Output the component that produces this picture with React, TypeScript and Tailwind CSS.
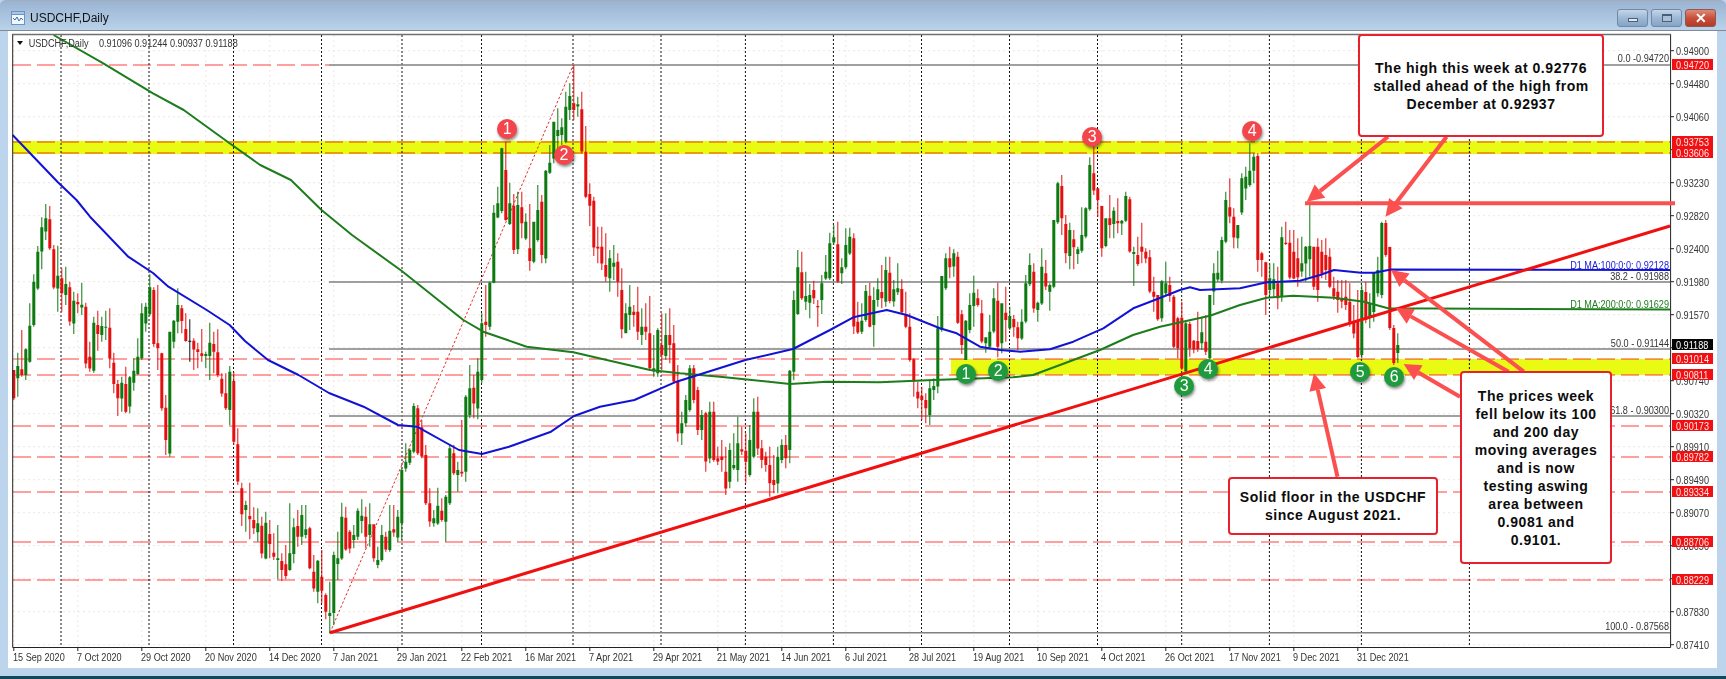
import React from "react";

type Bar = { k: number; c: string; w1: number; b1: number; b2: number; w2: number };

const seg = (start: number, off: number, s: string): Bar[] =>
  s
    .trim()
    .split(/\s*,\s*/)
    .map((row, i) => {
      const c = row[0];
      const [a, b, d, e] = row.slice(1).trim().split(/\s+/).map(Number);
      return { k: start + i, c, w1: off + a / 3, b1: off + b / 3, b2: off + d / 3, w2: off + e / 3 };
    });

const S1 = `r570 570 655 660,g518 558 595 650,r450 568 585 590,g505 508 585 600,g370 437 545 548,g283 305 435 440,g198 215 325 330,g112 142 215 268,g72 115 155 180,r78 118 205 210,r195 208 323 328,g197 287 325 395,r265 295 340 395,g260 312 345 375,r305 322 425 437,g335 362 430 462,r340 366 373 400,g308 374 382 405,r368 380 550 565,r485 530 565 575,g410 428 572 578,r392 435 462 512,g410 438 465 485,g392 440 443 480,r385 443 535 565,r518 548 612 640,r600 612 655 708,g590 608 655 695,r560 612 695 700,g588 592 680 700,g535 572 608 632,g475 530 582 585,g370 400 535 540,g368 380 430 455,g283 322 403 408,r322 330 492 500,r315 490 505 570,r518 520 685 692,r645 683 780 825,g455 455 820 830,g420 422 485 505,g325 375 425 460,r375 385 423 460,r400 447 483 485,k418 482 484 545,r475 482 508 570,r488 508 516 565,r447 520 528 545,g515 522 528 565,g428 488 528 600,r455 492 515 580,r448 517 585 592,r580 596 640 650,r580 640 685 690,g558 575 690 735,r575 603 785 795,r745 793 905 915,r908 925 1003 1038,g962 975 990 1055,r908 1008 1018 1078,r982 1020 1045 1062,g985 1030 1057 1085,r1010 1037 1120 1135,g995 1028 1135 1138,r1020 1062 1092 1135,r1060 1118 1130 1140,g1035 1135 1140 1198,r1120 1143 1170 1203,r1095 1153 1188 1198,g970 1120 1170 1172,g1015 1042 1122 1150,r990 1038 1070 1100,g975 1005 1070 1095,g975 1048 1065 1075,r1040 1045 1165 1168,r1125 1175 1225 1235,g1140 1142 1235 1270,r1110 1190 1232 1270,r1240 1245 1295 1318,g1205 1299 1308 1359,g1115 1125 1299 1335`;
const S2 = `g575 655 672 720,g488 530 655 660,r500 533 628 632,r570 575 625 640,g555 585 600 625,g505 512 590 600,g478 527 543 580,r500 530 590 625,g490 553 585 620,r553 553 655 665,g620 660 675 685,g555 585 660 665,r575 590 628 635,g495 572 630 635,r495 568 578 590,g510 530 592 605,g385 390 550 600,g310 365 385 395,g325 330 368 375,g190 198 335 340,r195 205 340 345,r240 262 350 355,r315 345 490 495,r445 490 545 560,g510 535 550 560,g443 497 550 555,r475 512 540 545,g465 470 545 605,g315 325 490 495,r315 340 400 405,g365 390 405 455,r240 395 400 410,g165 170 395 425,g75 145 225 235,r105 143 190 235,g55 95 205 238`;
const S3 = `g790 820 990 1000,r705 815 825 860,g695 698 830 840,g465 488 698 700,g410 460 503 505,g293 295 483 490,r275 360 510 512,g398 460 522 525,r432 467 600 612,g425 465 598 612,r425 472 520 565,g490 515 565 570,r462 595 633 662,g515 515 635 640,g405 480 570 575,r435 455 615 640,g360 362 625 640,g285 338 368 372,g215 215 325 340,g175 240 258 300,g205 232 255 285,g125 170 275 280,g100 138 180 210,r45 160 180 210,g140 163 170 200,r125 178 305 310,r228 305 440 445,r400 432 467 528,r440 452 592 618,r530 590 595 640,r530 590 640 660,r550 645 680 695,g600 625 685 725,g585 638 650 690,r610 635 695 740,r655 720 838 865,g760 790 850 850,g705 770 795 840,r765 785 795 830,r710 785 845 870,g775 830 855 885,r760 830 845 870,r738 850 955 960,g855 955 965 980,g835 840 970 980,r790 885 915 960,g790 855 918 930,r775 855 885 940,r825 880 995 1000,r945 995 1150 1175`;
const S4 = `g215 250 280 315,g165 180 250 260,g75 85 210 215,r75 85 180 190,r140 150 270 285,g210 225 270 300,r215 220 365 395,g185 215 355 370,r185 215 360 365,r320 355 365 375,r300 350 360 395,r320 395 445 465,g310 330 425 445,g280 375 385 390,g230 310 390 425,r260 328 335 345,r280 332 365 428,g255 300 405 410,g175 215 350 355,r170 215 325 345,r300 325 360 385,r335 350 375 395,r320 375 430 470,r345 420 435 460,g320 350 430 460,g298 315 360 370,r285 315 355 385`;
const S5 = `g720 722 960 1000,g482 510 725 750,g360 412 552 555,r365 427 505 510,g425 498 515 540,g462 495 518 565,r452 480 505 522,r510 528 532 590,g435 460 510 552,g375 425 445 450,g308 340 445 450,g285 322 338 345,r275 343 455 458,g385 412 430 462,g295 345 412 418,g293 320 370 375,r310 325 590 612,r515 575 607 612,g520 572 605 612,g465 483 570 575,r458 497 590 592,g472 510 585 650,g445 478 510 530,r405 486 505 535,g380 420 515 530,r380 428 513 520,g450 478 515 530,g400 475 487 495,r448 477 547 552,r485 555 590 595,r550 590 690 695,r685 688 755 800,r755 785 805 835,r770 797 810 870,r790 810 835 880,g750 775 855 885,g745 768 780 810,g558 595 770 790,g438 438 600 605,g370 385 475 480,r350 385 412 445,g358 370 410 440,r365 380 578 582,r540 553 645 672,g570 572 690 690,g490 525 600 610,g437 488 528 590,r478 505 525 530,r510 550 635 640,g622 622 640 668,g555 605 650 655,g475 505 605 610,r458 512 650 682`;
const S6 = `g550 550 670 700,r500 578 600 665,g560 588 625 630,r585 597 622 650,r605 622 655 690,g568 605 655 660,g465 490 605 610,g400 435 493 498,r430 455 565 578,g545 548 570 605,g385 440 550 555,r420 460 500 510,g490 495 515 572,g300 300 500 505,g185 190 307 312,r165 198 295 345,r285 312 400 430,g308 330 408 448,r330 358 382 448,g380 388 402 432,g262 345 392 398,g262 265 350 355,g112 135 268 272,r75 160 212 225,r205 205 240 290,r258 258 385 410,g295 295 378 382,r225 295 315 355,g262 272 312 355,r235 303 310 340,g300 302 310 345,g215 228 302 306,r230 238 395 398,g380 396 402 498,r350 405 432 438,r308 380 395 430,r385 395 415 430,r390 412 515 520,r470 515 530 575,r525 525 598 602,g480 484 595 605,g425 490 520 525,r470 495 528 545,r525 530 680 685,r590 595 685 715,r545 593 745 750,g605 610 755 760,r605 612 685 710,r660 662 688 700,r575 663 688 695,g590 637 670 690,r585 665 695 705,g525 525 715 718,g430 460 515 555,g392 458 478 485,g350 360 482 490,g215 240 365 370,r175 262 290 310,r265 290 352 385,g315 315 355 385,g160 175 278 285,g140 170 205 240,g70 152 195 200,g100 110 152 190,r100 108 420 455,r395 400 420 470,r425 427 525 585,g430 475 510 525,g430 478 508 530,r440 490 535 568,g320 352 530 545,r305 368 372 375,r330 368 472 478,r330 395 475 478,r355 415 472 500,g350 430 455 470,g378 380 430 485,g255 378 418 470,r380 380 500 510,r355 380 510 545,r360 395 460 475,r355 405 450 480,r385 410 500 505,r470 505 530 540,r480 515 540 578`;
const S7 = `r840 895 905 925,r840 890 915 930,r850 905 965 980,r915 965 1000 1015,r870 966 1071 1074,g855 870 1065 1075,r845 876 960 970,g880 909 951 985,g835 816 936 965,g770 810 880 890,g665 669 885 895,r660 669 765 770,r740 741 984 990,r975 984 1089 1095,g1000 1035 1059 1089`;

const bars: Bar[] = [
  ...seg(0, 180, S1),
  ...seg(81, 340, S2),
  ...seg(117, 50, S3),
  ...seg(167, 340, S4),
  ...seg(194, 130, S5),
  ...seg(247, 120, S6),
  ...seg(332, 0, S7),
];

const COLORS: Record<string, string> = { r: "#e60f10", g: "#0d7a10", k: "#111111" };
const bx = (k: number) => 13.3 + 4 * k;

const candlePath = (c: string) =>
  bars
    .filter((b) => b.c === c)
    .map((b) => {
      const x = bx(b.k);
      const h = Math.max(1, b.b2 - b.b1);
      return `M${x.toFixed(1)} ${b.w1.toFixed(1)}h1V${b.w2.toFixed(1)}h-1Z M${(x - 1).toFixed(1)} ${b.b1.toFixed(1)}h3v${h.toFixed(1)}h-3Z`;
    })
    .join(" ");

const pts = (a: number[][]) => a.map((p) => p.join(",")).join(" ");

const BLUE = [[12.6,135],[28.7,151.7],[57.4,181.7],[76.5,200],[90,216.7],[128.2,256.7],[153,273],[168.4,286.7],[206.7,310],[229.6,325],[245,341],[268,360],[298.5,375],[329,393],[363.6,406.7],[398,425],[417,426.7],[459,450],[482,454],[509,446.7],[551,431.7],[574,416],[600,406.7],[634.4,400],[676.5,381.7],[745.4,360],[793,349],[830,330],[853.3,317.3],[886.7,310],[906.7,315],[940,328.3],[956.7,333.3],[980,346.7],[1000,350],[1020,351.7],[1050,349.3],[1073.3,341.7],[1103.3,328.3],[1133.3,308.3],[1156.7,299.3],[1180,290],[1190,287.3],[1200,290],[1240,288.3],[1266.7,282.3],[1300,280.7],[1320,275],[1334,270],[1361,272.7],[1374.4,272.7],[1391,269.6],[1670,270]];
const GREEN = [[53.6,35],[103.3,63.3],[153,93.3],[183.7,110],[229.6,143.3],[260.2,165],[290.9,180],[321.5,210],[352,235],[401.8,271],[463.3,320],[483.3,331.7],[526.7,346.7],[573.3,352.3],[606.7,360],[650,370],[680,373.3],[720,376.7],[790,384],[826.7,381.7],[880,382.3],[933.3,380],[1013,377.3],[1033,375],[1060,365],[1100,350],[1133,335],[1160,326.7],[1210,315.7],[1240,305],[1266.7,297.7],[1293,295.7],[1334,297.7],[1364,301.7],[1388,308.3],[1670,309.5]];

const dateLabels = ["15 Sep 2020","7 Oct 2020","29 Oct 2020","20 Nov 2020","14 Dec 2020","7 Jan 2021","29 Jan 2021","22 Feb 2021","16 Mar 2021","7 Apr 2021","29 Apr 2021","21 May 2021","14 Jun 2021","6 Jul 2021","28 Jul 2021","19 Aug 2021","10 Sep 2021","4 Oct 2021","26 Oct 2021","17 Nov 2021","9 Dec 2021","31 Dec 2021"];
const priceAxis = ["0.94900","0.94480","0.94060","","0.93230","0.92820","0.92400","0.91980","0.91570","","0.90740","0.90320","0.89910","0.89490","0.89070","0.88650","","0.87830","0.87410"];
const redTags: [string, number][] = [["0.94720",65],["0.93753",142],["0.93606",153],["0.91014",359],["0.90811",375],["0.90173",426],["0.89782",457],["0.89334",492],["0.88706",542],["0.88229",580]];
const salmon = [65,142,153,359,375,426,457,492,542,580];
const dotted = [61,149,233.5,321.5,402,481.5,573,661,745.4,833.4,921.5,1009.5,1097.5,1181.7,1269.4,1361.4,1469.4];
const fibs = [65,282,349,416,632.7];
const fibLabels: [string, number][] = [["0.0 -0.94720",62],["38.2 - 0.91988",280],["50.0 - 0.91144",347],["61.8 - 0.90300",414],["100.0 - 0.87568",630]];

const arrows = [
  [1388,136.7,1306.7,201.7],
  [1446.6,136.7,1385.5,216.7],
  [1523.7,371.7,1391,270],
  [1508.6,371.7,1396,308],
  [1460,396.7,1403.6,364],
  [1337.5,476.7,1314,373.3],
];

const bubbles: [string, number, number, string][] = [
  ["1",507.3,129,"r"],["2",564,155,"r"],["3",1092.3,136.7,"r"],["4",1252.3,131,"r"],
  ["1",966,374,"g"],["2",998.3,370.7,"g"],["3",1184.3,385.7,"g"],["4",1208.3,369.3,"g"],["5",1360.3,371.7,"g"],["6",1394.2,377.3,"g"],
];

function Arrow({ a }: { a: number[] }) {
  const [x1, y1, x2, y2] = a;
  const l = Math.hypot(x2 - x1, y2 - y1);
  const ux = (x2 - x1) / l;
  const uy = (y2 - y1) / l;
  const bx0 = x2 - ux * 17;
  const by0 = y2 - uy * 17;
  const p = [[x2, y2], [bx0 - uy * 8.5, by0 + ux * 8.5], [bx0 + uy * 8.5, by0 - ux * 8.5]];
  return (
    <g>
      <line x1={x1} y1={y1} x2={bx0} y2={by0} stroke="#fb5050" strokeWidth="4" />
      <polygon points={pts(p)} fill="#fb5050" />
    </g>
  );
}

const axisFont = { fontFamily: '"Liberation Sans", Arial, sans-serif', fontSize: 11 };

function AxisText({ x, y, fill = "#333", anchor = "start", children }: { x: number; y: number; fill?: string; anchor?: "start" | "end"; children: string }) {
  return (
    <text transform={`translate(${x} ${y}) scale(0.83 1)`} fill={fill} textAnchor={anchor} {...axisFont}>
      {children}
    </text>
  );
}

function Chart() {
  return (
    <svg className="absolute inset-0 h-full w-full" viewBox="8 31 1709 637">
      {/* faint grid */}
      <g stroke="#efe6de" strokeWidth="1" strokeDasharray="2 3">
        {priceAxis.map((_, i) => (
          <line key={i} x1={13} x2={1670} y1={50.7 + 33 * i} y2={50.7 + 33 * i} />
        ))}
        {dateLabels.map((_, i) => (
          <line key={i} x1={13.8 + 64 * i} x2={13.8 + 64 * i} y1={35} y2={647} />
        ))}
      </g>
      {/* support and resistance bands */}
      <rect x="13" y="141" width="1657" height="13" fill="#e9fb12" />
      <rect x="951" y="359" width="719" height="16" fill="#e9fb12" />
      <g className="mix-blend-multiply" stroke="#ff8080" strokeWidth="1.6" strokeDasharray="18 6">
        {salmon.map((y) => (
          <line key={y} x1={13} x2={y === 65 ? 329 : 1670} y1={y} y2={y} />
        ))}
      </g>
      {/* vertical dotted */}
      <g stroke="#111" strokeWidth="1" strokeDasharray="2 2">
        {dotted.map((x) => (
          <line key={x} x1={x} x2={x} y1={35} y2={647} />
        ))}
      </g>
      {/* fibonacci */}
      <g stroke="#808080" strokeWidth="1.5">
        {fibs.map((y) => (
          <line key={y} x1={329} x2={1670} y1={y} y2={y} />
        ))}
      </g>
      <line x1={330} y1={632.7} x2={573.3} y2={65} stroke="#e63030" strokeWidth="1" strokeDasharray="2.5 2" />
      {/* candles */}
      {["r", "g", "k"].map((c) => (
        <path key={c} d={candlePath(c)} fill={COLORS[c]} />
      ))}
      {/* moving averages */}
      <polyline points={pts(GREEN)} fill="none" stroke="#1d7d1d" strokeWidth="2" strokeLinejoin="round" />
      <polyline points={pts(BLUE)} fill="none" stroke="#1212d6" strokeWidth="2" strokeLinejoin="round" />
      {/* trend line */}
      <line x1={330} y1={632.7} x2={1670} y2={226} stroke="#f01010" strokeWidth="3" />
      {/* frame */}
      <path d="M12.7 34V647.5H1670.6V34" fill="none" stroke="#222" strokeWidth="1" />
      <line x1={12.7} x2={1670.6} y1={34.5} y2={34.5} stroke="#707070" strokeWidth="1.5" />
      {/* axis ticks */}
      <g stroke="#222" strokeWidth="1">
        {priceAxis.map((_, i) => (
          <line key={i} x1={1671} x2={1674} y1={50.7 + 33 * i} y2={50.7 + 33 * i} />
        ))}
        {dateLabels.map((_, i) => (
          <line key={i} x1={13.8 + 64 * i} x2={13.8 + 64 * i} y1={647} y2={651} />
        ))}
      </g>
      {/* axis labels */}
      {priceAxis.map((p, i) =>
        p ? (
          <AxisText key={p} x={1676} y={54.7 + 33 * i}>{p}</AxisText>
        ) : null
      )}
      {dateLabels.map((d, i) => (
        <AxisText key={d} x={13 + 64 * i} y={661}>{d}</AxisText>
      ))}
      {redTags.map(([t, y]) => (
        <g key={t}>
          <rect x={1672} y={y - 6} width={41} height={11} fill="#f01014" />
          <AxisText x={1676} y={y + 3.5} fill="#ffe8e0">{t}</AxisText>
        </g>
      ))}
      <rect x={1672} y={339} width={41} height={11} fill="#050505" />
      <AxisText x={1676} y={348.5} fill="#ffffff">0.91188</AxisText>
      {fibLabels.map(([t, y]) => (
        <AxisText key={t} x={1669} y={y} anchor="end">{t}</AxisText>
      ))}
      <AxisText x={1669} y={269} anchor="end" fill="#1a1ad8">D1 MA:100:0:0: 0.92128</AxisText>
      <AxisText x={1669} y={308} anchor="end" fill="#1d7d1d">D1 MA:200:0:0: 0.91629</AxisText>
      {/* header */}
      <polygon points="17,41 23,41 20,45" fill="#111" />
      <AxisText x={28.7} y={46.5}>USDCHF,Daily</AxisText>
      <AxisText x={99} y={46.5}>0.91096 0.91244 0.90937 0.91188</AxisText>
      {/* drawn annotation lines */}
      <line x1={1305} x2={1675} y1={203.3} y2={203.3} stroke="#fb5050" strokeWidth="4" />
      {arrows.map((a, i) => (
        <Arrow key={i} a={a} />
      ))}
    </svg>
  );
}

function WinBtn({ children, close }: { children: React.ReactNode; close?: boolean }) {
  return (
    <div
      className={
        close
          ? "flex h-[18px] w-[31px] items-center justify-center rounded-[3px] border border-[#8c5a50] bg-linear-to-b from-[#dc8a78] via-[#c8503a] to-[#b23a28]"
          : "flex h-[18px] w-[31px] items-center justify-center rounded-[3px] border border-[#6f8aa8] bg-linear-to-b from-[#c4d6e8] via-[#9db8d4] to-[#86a4c4]"
      }
    >
      {children}
    </div>
  );
}

function Callout({ className, children }: { className: string; children: React.ReactNode }) {
  return (
    <div
      className={`absolute flex items-center justify-center rounded-[4px] border-2 border-[#e8222c] bg-white text-center text-[14px] leading-[18px] font-bold tracking-[0.55px] text-[#0c0c0c] ${className}`}
    >
      <div>{children}</div>
    </div>
  );
}

export default function App() {
  return (
    <div className="relative flex h-[679px] w-[1726px] flex-col overflow-hidden bg-[#bcd4ec] font-['Liberation_Sans',Arial,sans-serif]">
      <div className="flex h-[31px] shrink-0 items-center justify-between rounded-t-[6px] border-t border-b border-t-[#a4acb8] border-b-[#7f8a96] bg-linear-to-b from-[#9ab3d2] to-[#bad3ea] pt-[5px] pr-[10px] pl-[11px]">
        <div className="flex items-center gap-[5px]">
          <svg width="14" height="14" viewBox="0 0 14 14">
            <rect x="0.5" y="2.5" width="13" height="11" fill="#f2f7fc" stroke="#6b93c4" />
            <rect x="0.5" y="0.5" width="13" height="3" fill="#a9c6e6" stroke="#6b93c4" />
            <path d="M2 7l2 2 2-3 2 4 2-3 2 2" fill="none" stroke="#3a6fb0" strokeWidth="1" />
          </svg>
          <span className="text-[12px] leading-none text-[#101418]">USDCHF,Daily</span>
        </div>
        <div className="flex items-center gap-[3px]">
          <WinBtn>
            <div className="mt-[4px] h-[4px] w-[10px] border border-[#4a5e76] bg-[#dfe8f2]" />
          </WinBtn>
          <WinBtn>
            <div className="h-[8px] w-[10px] border border-[#4a5e76] border-t-2 bg-[#a9c0d8]" />
          </WinBtn>
          <WinBtn close>
            <span className="text-[14px] leading-none font-bold text-white">✕</span>
          </WinBtn>
        </div>
      </div>
      <div className="flex min-h-0 flex-1 pr-[9px] pl-[8px]">
        <div className="relative h-[637px] w-[1709px] bg-white">
          <Chart />
          <Callout className="top-[3px] left-[1350px] h-[103px] w-[246px] tracking-[0.8px]">
            The high this week at 0.92776
            <br />
            stalled ahead of the high from
            <br />
            December at 0.92937
          </Callout>
          <Callout className="top-[446px] left-[1220px] h-[58px] w-[210px]">
            Solid floor in the USDCHF
            <br />
            since August 2021.
          </Callout>
          <Callout className="top-[340px] left-[1452px] h-[193px] w-[152px]">
            The prices week
            <br />
            fell below its 100
            <br />
            and 200 day
            <br />
            moving averages
            <br />
            and is now
            <br />
            testing aswing
            <br />
            area between
            <br />
            0.9081 and
            <br />
            0.9101.
          </Callout>
          {bubbles.map(([n, x, y, c], i) => (
            <div
              key={i}
              style={{ left: x - 8 - 10, top: y - 31 - 10 }}
              className={
                c === "r"
                  ? "absolute flex h-[20px] w-[20px] items-center justify-center rounded-full bg-[#f3464c] text-[16px] leading-none text-white shadow-[1px_2px_3px_rgba(0,0,0,0.45)]"
                  : "absolute flex h-[20px] w-[20px] items-center justify-center rounded-full bg-[#1f9a3c] text-[16px] leading-none text-white shadow-[1px_2px_3px_rgba(0,0,0,0.45)]"
              }
            >
              {n}
            </div>
          ))}
        </div>
      </div>
      <div className="h-[3px] shrink-0 bg-[#12485c]" />
    </div>
  );
}
